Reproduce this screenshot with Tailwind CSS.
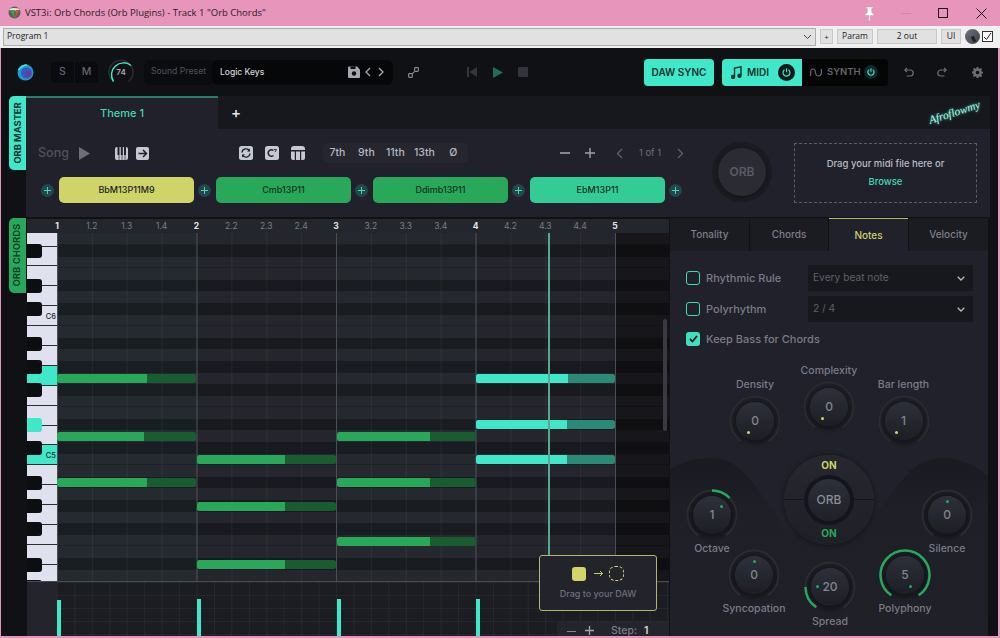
<!DOCTYPE html>
<html>
<head>
<meta charset="utf-8">
<script src="https://cdn.jsdelivr.net/npm/@tailwindcss/browser@4"></script>
</head>
<body class="m-0 overflow-hidden bg-[#e795ba]">
<div class="w-[1000px] h-[638px] flex flex-col overflow-hidden font-['Inter',sans-serif]">

  <!-- window title -->
  <div class="h-[26px] flex-none flex items-center bg-[#e795ba] text-[#2b1c28] font-['Open_Sans',sans-serif]">
    <svg class="ml-[8px] w-[13px] h-[14px]" viewBox="0 0 13 14"><circle cx="6.5" cy="6.5" r="6" fill="#5b5f64"/><path d="M1 3 Q6 1 12 3 Q10 5 8 5 Q6 4 4 5 Q2 5 1 3Z" fill="#e8e4d8"/><path d="M2 4 Q5 9 6.5 13 Q5 5 8 4Z" fill="#3fa34d"/><path d="M11 4 Q9 9 6.5 13 Q8 7 8 4Z" fill="#d9562c"/></svg>
    <span class="ml-[4px] text-[9.500px] whitespace-nowrap">VST3i: Orb Chords (Orb Plugins) - Track 1 "Orb Chords"</span>
    <svg class="ml-auto w-[13px] h-[15px]" viewBox="0 0 13 15" fill="#fff" stroke="#c9a3b5" stroke-width=".6"><path d="M3 1h7v1.5h-1.3v4l2.3 2v1H2v-1l2.3-2v-4H3Z"/><path d="M6.5 9.500v5" stroke="#fff" stroke-width="1.200"/></svg>
    <div class="ml-[25px] w-[10px] h-[1px] bg-[#cf8aa8]"></div>
    <div class="ml-[27px] w-[10px] h-[10px] border border-[#1d1218]"></div>
    <svg class="ml-[28px] mr-[13px] w-[11px] h-[11px]" viewBox="0 0 11 11" stroke="#1d1218" stroke-width="1"><path d="M.5 .5l10 10M10.500 .5l-10 10"/></svg>
  </div>

  <!-- host toolbar -->
  <div class="h-[22px] flex-none flex items-center pb-[2px] bg-[#f0f0f0] border-t border-[#fbf3f7] text-[#222] font-['Open_Sans',sans-serif]">
    <div class="ml-[3px] w-[813px] h-[18px] bg-[#e1e1e1] border border-[#adadad] flex items-center pl-[3px] pr-[3px]">
      <span class="text-[8.500px]">Program 1</span>
      <svg class="ml-auto w-[9px] h-[6px]" viewBox="0 0 9 6" fill="none" stroke="#444" stroke-width="1"><path d="M1 1l3.500 3.500L8 1"/></svg>
    </div>
    <div class="ml-[4px] w-[13px] h-[15px] bg-[#e1e1e1] border border-[#c8c8c8] flex items-center justify-center text-[8px]">+</div>
    <div class="ml-[4px] w-[36px] h-[15px] bg-[#e1e1e1] border border-[#c8c8c8] flex items-center justify-center text-[8.500px]">Param</div>
    <div class="ml-[4px] w-[60px] h-[15px] bg-[#e1e1e1] border border-[#c8c8c8] flex items-center justify-center text-[8.500px]">2 out</div>
    <div class="ml-[4px] w-[20px] h-[15px] bg-[#e1e1e1] border border-[#c8c8c8] flex items-center justify-center text-[8.500px]">UI</div>
    <div class="ml-[4px] w-[15px] h-[15px] rounded-full bg-gradient-to-br from-[#6f7680] to-[#3c4047] relative"><div class="absolute left-[7px] top-[7px] w-[3px] h-[6px] bg-[#1c2024] -rotate-[25deg]"></div></div>
    <div class="ml-[2px] w-[11px] h-[11px] bg-white border border-[#333] flex items-center justify-center">
      <svg class="w-[9px] h-[9px]" viewBox="0 0 9 9" fill="none" stroke="#222" stroke-width="1"><path d="M1 5l2.500 2.500L8 1"/></svg>
    </div>
  </div>

  <!-- plugin -->
  <div class="flex-1 min-h-0 ml-[1px] mr-[2px] mb-[2px] flex flex-col bg-[#0f1114] text-[#8a8c96]">

    <!-- top bar -->
    <div class="h-[48px] flex-none flex items-center">
      <svg class="ml-[16px] w-[17px] h-[17px]" viewBox="0 0 17 17"><circle cx="8.500" cy="8.500" r="8" fill="#18a0c8"/><circle cx="9.500" cy="9" r="5.500" fill="#3c56c8"/><circle cx="11" cy="10" r="3" fill="#6a3aa8"/><path d="M1.500 6Q5 1 10 1" stroke="#43e8d0" stroke-width="1.500" fill="none"/></svg>
      <div class="ml-[17px] w-[47px] h-[21px] rounded-[4px] bg-[#0a0b0e] flex text-[10.500px] font-medium text-[#62646c]">
        <div class="w-[24px] flex items-center justify-center border-r border-[#15161a]">S</div>
        <div class="flex-1 flex items-center justify-center">M</div>
      </div>
      <div class="ml-[10px] w-[26px] h-[26px] relative flex items-center justify-center text-[8px] font-semibold text-[#a8aab2]">
        <svg class="absolute inset-0 w-[26px] h-[26px]" viewBox="0 0 26 26" fill="none" stroke-width="1.500"><path d="M5.500 22.500A12 12 0 1 1 20.500 22.500" stroke="#2b2d30"/><path d="M5.500 22.500A12 12 0 0 1 23 6.500" stroke="#3fe8c8"/></svg>
        74
      </div>
      <div class="ml-[10px] h-[25px] w-[68px] bg-[#0b0c0f] rounded-l-[6px] flex items-center pl-[7px] text-[8.700px] text-[#50525b] whitespace-nowrap">Sound Preset</div>
      <div class="h-[25px] w-[181px] bg-[#060709] rounded-[6px] flex items-center pl-[8px] text-[8.500px] font-medium text-[#d4d5da]">
        Logic Keys
        <svg class="ml-auto w-[12px] h-[12px]" viewBox="0 0 12 12"><path d="M0 1.500Q0 .5 1 .5H9L12 3.500V11Q12 12 11 12H1Q0 12 0 11Z" fill="#a6a8b0"/><rect x="2.500" y=".5" width="5" height="2.500" fill="#0c0d10"/><circle cx="6" cy="7.500" r="2.200" fill="#0c0d10"/></svg>
        <svg class="ml-[5px] w-[6px] h-[10px]" viewBox="0 0 6 10" fill="none" stroke="#a6a8b0" stroke-width="1.300"><path d="M5 1L1 5l4 4"/></svg>
        <svg class="ml-[7px] mr-[9px] w-[6px] h-[10px]" viewBox="0 0 6 10" fill="none" stroke="#a6a8b0" stroke-width="1.300"><path d="M1 1l4 4-4 4"/></svg>
      </div>
      <svg class="ml-[15px] w-[11px] h-[11px]" viewBox="0 0 11 11" fill="none" stroke="#8a8c94" stroke-width="1.100"><rect x=".6" y="6.600" width="3.800" height="3.800" rx=".8"/><rect x="6.600" y=".6" width="3.800" height="3.800" rx=".8"/><path d="M4.400 6.600L6.600 4.400"/></svg>
      <svg class="ml-[48px] w-[10px] h-[10px]" viewBox="0 0 10 10" fill="#33353c"><rect width="2" height="10"/><path d="M10 0v10L2.500 5Z"/></svg>
      <svg class="ml-[16px] w-[10px] h-[11px]" viewBox="0 0 10 11" fill="#1f6e58"><path d="M0 0l10 5.500L0 11Z"/></svg>
      <div class="ml-[15px] w-[10px] h-[10px] rounded-[1px] bg-[#33353c]"></div>
      <div class="ml-[116px] w-[70px] h-[27px] rounded-[4px] bg-[#3fe8c8] flex items-center justify-center text-[10px] font-semibold text-[#16332f] whitespace-nowrap">DAW SYNC</div>
      <div class="ml-[8px] h-[27px] w-[80px] rounded-l-[4px] bg-[#3fe8c8] flex items-center text-[10px] font-semibold text-[#16332f]">
        <svg class="ml-[9px] w-[11px] h-[13px]" viewBox="0 0 11 13" fill="none" stroke="#16332f" stroke-width="1.400"><path d="M3.500 11V2L10 .8v8.500"/><circle cx="2" cy="11" r="1.500" fill="#16332f"/><circle cx="8.500" cy="9.800" r="1.500" fill="#16332f"/></svg>
        <span class="ml-[5px]">MIDI</span>
        <div class="ml-auto mr-[7px] w-[17px] h-[17px] rounded-full bg-[#10181a] flex items-center justify-center">
          <svg class="w-[9px] h-[9px]" viewBox="0 0 9 9" fill="none" stroke="#3fe8c8" stroke-width="1.200"><path d="M2.500 1.800a3.500 3.500 0 1 0 4 0M4.500 .3v4"/></svg>
        </div>
      </div>
      <div class="h-[27px] w-[86px] rounded-r-[4px] bg-[#050506] flex items-center text-[9.500px] font-semibold text-[#63656c]">
        <svg class="ml-[8px] w-[12px] h-[9px]" viewBox="0 0 12 9" fill="none" stroke="#63656c" stroke-width="1.200"><path d="M.6 8V4Q.8 1 3 1T5.500 4.500 8.500 8 11.400 5V1"/></svg>
        <span class="ml-[5px]">SYNTH</span>
        <div class="ml-auto mr-[10px] w-[14px] h-[14px] rounded-full bg-[#10282a] flex items-center justify-center">
          <svg class="w-[8px] h-[8px]" viewBox="0 0 9 9" fill="none" stroke="#3fe8c8" stroke-width="1.300"><path d="M2.500 1.800a3.500 3.500 0 1 0 4 0M4.500 .3v4"/></svg>
        </div>
      </div>
      <svg class="ml-[16px] w-[10px] h-[10px]" viewBox="0 0 10 10" fill="none" stroke="#6e7078" stroke-width="1.200"><path d="M3 .8L.8 3 3 5.200M1 3h5.200a3 3 0 0 1 0 6H2.500"/></svg>
      <svg class="ml-[23px] w-[10px] h-[10px]" viewBox="0 0 10 10" fill="none" stroke="#6e7078" stroke-width="1.200"><path d="M7 .8L9.200 3 7 5.200M9 3H3.800a3 3 0 0 0 0 6H7.500"/></svg>
      <svg class="ml-[25px] w-[11px] h-[11px]" viewBox="0 0 24 24" fill="#6a6c74"><path d="M10 0h4l.6 3.200 2 .8L19.300 2.200l2.800 2.800-1.800 2.700.8 2 3.200.6v4l-3.200.6-.8 2 1.800 2.700-2.800 2.800-2.700-1.800-2 .8L14 24h-4l-.6-3.200-2-.8-2.700 1.800-2.800-2.800 1.800-2.700-.8-2L0 14v-4l3.200-.6.8-2L2.200 4.700 5 1.900l2.700 1.800 2-.8ZM12 8a4 4 0 1 0 0 8 4 4 0 0 0 0-8Z"/></svg>
    </div>

    <!-- body -->
    <div class="flex-1 min-h-0 flex">
      <!-- side tabs -->
      <div class="w-[25px] flex-none flex flex-col items-end">
        <div class="w-[17px] h-[74px] rounded-l-[5px] bg-[#3fe8c8] flex items-center justify-center">
          <span class="-rotate-90 whitespace-nowrap text-[9.300px] font-bold text-[#123430]">ORB MASTER</span>
        </div>
        <div class="mt-[48px] w-[17px] h-[75px] rounded-l-[5px] bg-[#27a85c] flex items-center justify-center">
          <span class="-rotate-90 whitespace-nowrap text-[9.500px] font-semibold text-[#0f3a20]">ORB CHORDS</span>
        </div>
      </div>

      <!-- main column -->
      <div class="flex-1 min-w-0 flex flex-col pr-[8px]">
        <!-- tab row -->
        <div class="h-[33px] flex-none flex bg-[#17181e] relative">
          <div class="w-[192px] bg-[#20212a] border-t-2 border-[#2a7d6a] flex items-center justify-center text-[11px] font-medium text-[#3fd8b0]">Theme 1</div>
          <div class="ml-[13px] self-center text-[15px] leading-none font-medium text-[#e8e8ea]">+</div>
          <div class="absolute left-[902px] top-[11px] -rotate-[18deg] font-['Liberation_Serif',serif] italic text-[11.500px] leading-none text-[#b8f5e6] [text-shadow:0_0_3px_#2fd8b0]">Afroflowmy</div>
        </div>

        <!-- header panel -->
        <div class="h-[88px] flex-none bg-[#20212a] flex flex-col relative">
          <div class="h-[48px] flex-none flex items-center pb-[1px] pt-[1px]">
            <span class="ml-[12px] text-[12.500px] font-medium text-[#50525b]">Song</span>
            <svg class="ml-[10px] w-[11px] h-[13px]" viewBox="0 0 11 13" fill="#6c6e77"><path d="M0 0l11 6.500L0 13Z"/></svg>
            <svg class="ml-[25px] w-[13px] h-[13px]" viewBox="0 0 13 13"><rect width="13" height="13" rx="2" fill="#c6c8d2"/><rect x="2.500" width="2" height="8" fill="#20212a"/><rect x="5.800" width="2" height="8" fill="#20212a"/><rect x="9" width="2" height="8" fill="#20212a"/><path d="M4 8v5M7 8v5M10 8v5" stroke="#20212a" stroke-width=".7"/></svg>
            <svg class="ml-[8px] w-[13px] h-[13px]" viewBox="0 0 13 13"><rect width="13" height="13" rx="2" fill="#c6c8d2"/><path d="M2.500 6.500h7.500M7 3l3.500 3.500L7 10" stroke="#20212a" stroke-width="1.500" fill="none"/></svg>
            <svg class="ml-[90px] w-[14px] h-[14px]" viewBox="0 0 14 14"><rect width="14" height="14" rx="2.500" fill="#c6c8d2"/><path d="M3 6.500A4 4 0 0 1 10.500 5M11 7.500A4 4 0 0 1 3.500 9" stroke="#20212a" stroke-width="1.300" fill="none"/><path d="M11 2.500V5.500H8M3 11.500V8.500H6" fill="#20212a"/></svg>
            <svg class="ml-[12px] w-[14px] h-[14px]" viewBox="0 0 14 14"><rect width="14" height="14" rx="2.500" fill="#c6c8d2"/><path d="M8.500 4.500A3.200 3.200 0 1 0 8.500 9.500" stroke="#20212a" stroke-width="1.400" fill="none"/><path d="M9 3.500h2.500L10 6" stroke="#20212a" stroke-width=".9" fill="none"/></svg>
            <svg class="ml-[12px] w-[14px] h-[14px]" viewBox="0 0 14 14"><path d="M0 3Q0 0 3 0H11Q14 0 14 3V4H0Z" fill="#c6c8d2"/><path d="M0 5.500H3.800V14H2Q0 14 0 12ZM5 5.500H9V14H5ZM10.200 5.500H14V12Q14 14 12 14H10.200Z" fill="#c6c8d2"/></svg>
            <div class="ml-[18px] w-[145px] h-[20px] rounded-[5px] bg-[#25262e] flex items-center text-[10.500px] font-medium text-[#b5b7c0]">
              <span class="w-[29px] text-center">7th</span><span class="w-[29px] text-center">9th</span><span class="w-[29px] text-center">11th</span><span class="w-[29px] text-center">13th</span><span class="w-[29px] text-center">Ø</span>
            </div>
            <span class="ml-[92px] w-[10px] h-[1.500px] bg-[#85878f]"></span>
            <svg class="ml-[15px] w-[10px] h-[10px]" viewBox="0 0 10 10" stroke="#a0a2aa" stroke-width="1.400"><path d="M0 5h10M5 0v10"/></svg>
            <svg class="ml-[21px] w-[7px] h-[11px]" viewBox="0 0 7 11" fill="none" stroke="#5f6169" stroke-width="1.300"><path d="M6 1L1.500 5.500 6 10"/></svg>
            <span class="ml-[16px] w-[24px] text-[9.500px] whitespace-nowrap text-[#6d6f78]">1 of 1</span>
            <svg class="ml-[14px] w-[7px] h-[11px]" viewBox="0 0 7 11" fill="none" stroke="#5f6169" stroke-width="1.300"><path d="M1 1l4.500 4.500L1 10"/></svg>
          </div>
          <div class="flex items-center gap-[4px] pl-[15px]">
            <span class="w-[13px] h-[13px] rounded-full bg-[#23474c] flex items-center justify-center"><svg class="w-[7px] h-[7px]" viewBox="0 0 7 7" stroke="#3fd8b8" stroke-width="1"><path d="M0 3.500h7M3.500 0v7"/></svg></span>
            <div class="ml-[1px] w-[135px] h-[26px] rounded-[5px] bg-[#cfd468] flex items-center justify-center text-[9px] font-medium text-[#1c1d22]">BbM13P11M9</div>
            <span class="w-[13px] h-[13px] rounded-full bg-[#23474c] flex items-center justify-center"><svg class="w-[7px] h-[7px]" viewBox="0 0 7 7" stroke="#3fd8b8" stroke-width="1"><path d="M0 3.500h7M3.500 0v7"/></svg></span>
            <div class="ml-[1px] w-[135px] h-[26px] rounded-[5px] bg-[#28a858] flex items-center justify-center text-[9px] font-medium text-[#12301f]">Cmb13P11</div>
            <span class="w-[13px] h-[13px] rounded-full bg-[#23474c] flex items-center justify-center"><svg class="w-[7px] h-[7px]" viewBox="0 0 7 7" stroke="#3fd8b8" stroke-width="1"><path d="M0 3.500h7M3.500 0v7"/></svg></span>
            <div class="ml-[1px] w-[135px] h-[26px] rounded-[5px] bg-[#28a858] flex items-center justify-center text-[9px] font-medium text-[#12301f]">Ddimb13P11</div>
            <span class="w-[13px] h-[13px] rounded-full bg-[#23474c] flex items-center justify-center"><svg class="w-[7px] h-[7px]" viewBox="0 0 7 7" stroke="#3fd8b8" stroke-width="1"><path d="M0 3.500h7M3.500 0v7"/></svg></span>
            <div class="ml-[1px] w-[135px] h-[26px] rounded-[5px] bg-[#33cc96] flex items-center justify-center text-[9px] font-medium text-[#12301f]">EbM13P11</div>
            <span class="w-[13px] h-[13px] rounded-full bg-[#23474c] flex items-center justify-center"><svg class="w-[7px] h-[7px]" viewBox="0 0 7 7" stroke="#3fd8b8" stroke-width="1"><path d="M0 3.500h7M3.500 0v7"/></svg></span>
          </div>
          <!-- ORB big + drop box -->
          <div class="absolute left-[686px] top-[13px] w-[60px] h-[60px] rounded-full bg-[#1a1b21] flex items-center justify-center">
            <div class="w-[48px] h-[48px] rounded-full bg-[#2a2b33] flex items-center justify-center text-[12px] font-semibold text-[#5a5c66] shadow-[0_1px_3px_#0006]">ORB</div>
          </div>
          <div class="absolute left-[768px] top-[14px] w-[183px] h-[60px] border border-dashed border-[#5a5c63] flex flex-col items-center pt-[13px]">
            <span class="text-[9.500px] font-medium leading-[14px] text-[#b9bbc3] whitespace-nowrap">Drag your midi file here or</span>
            <span class="mt-[4px] text-[9.500px] font-medium leading-[13px] text-[#3fd8b8]">Browse</span>
          </div>
        </div>

        <!-- workspace -->
        <div class="flex-1 min-h-0 flex pt-[2px]">
          <!-- piano roll -->
          <div class="w-[642px] flex-none ml-[1px] flex flex-col relative overflow-hidden">
            <div class="h-[14.400px] flex-none bg-[#24262d] flex items-center pl-[12.600px] text-[8.500px] leading-none text-[#7a7c85]">
              <span class="w-[34.875px] flex-none text-center font-bold text-[#e4e5ea]">1</span><span class="w-[34.875px] flex-none text-center">1.2</span><span class="w-[34.875px] flex-none text-center">1.3</span><span class="w-[34.875px] flex-none text-center">1.4</span>
              <span class="w-[34.875px] flex-none text-center font-bold text-[#e4e5ea]">2</span><span class="w-[34.875px] flex-none text-center">2.2</span><span class="w-[34.875px] flex-none text-center">2.3</span><span class="w-[34.875px] flex-none text-center">2.4</span>
              <span class="w-[34.875px] flex-none text-center font-bold text-[#e4e5ea]">3</span><span class="w-[34.875px] flex-none text-center">3.2</span><span class="w-[34.875px] flex-none text-center">3.3</span><span class="w-[34.875px] flex-none text-center">3.4</span>
              <span class="w-[34.875px] flex-none text-center font-bold text-[#e4e5ea]">4</span><span class="w-[34.875px] flex-none text-center">4.2</span><span class="w-[34.875px] flex-none text-center">4.3</span><span class="w-[34.875px] flex-none text-center">4.4</span>
              <span class="w-[34.875px] flex-none text-center font-bold text-[#e4e5ea]">5</span>
            </div>

            <div class="h-[348px] flex-none flex">
              <!-- keyboard -->
              <div class="w-[30px] flex-none relative overflow-hidden flex flex-col bg-[#dfe1ee] text-[7.500px] font-medium text-[#23252b]">
                <div class="h-[13.200px] flex-none border-b border-[#2a2d33]"></div>
                <div class="h-[19.900px] flex-none border-b border-[#2a2d33]"></div>
                <div class="h-[19.900px] flex-none border-b border-[#2a2d33]"></div>
                <div class="h-[19.900px] flex-none border-b border-[#2a2d33]"></div>
                <div class="h-[19.900px] flex-none border-b border-[#2a2d33] flex items-end justify-end pr-[1px] pb-[5px] leading-none">C6</div>
                <div class="h-[19.900px] flex-none border-b border-[#2a2d33]"></div>
                <div class="h-[19.900px] flex-none border-b border-[#2a2d33]"></div>
                <div class="h-[19.900px] flex-none border-b border-[#2a2d33] bg-[#3fe8c8]"></div>
                <div class="h-[19.900px] flex-none border-b border-[#2a2d33]"></div>
                <div class="h-[19.900px] flex-none border-b border-[#2a2d33]"></div>
                <div class="h-[19.900px] flex-none border-b border-[#2a2d33]"></div>
                <div class="h-[19.900px] flex-none border-b border-[#2a2d33] bg-[#3fe8c8] flex items-end justify-end pr-[1px] pb-[5px] leading-none">C5</div>
                <div class="h-[19.900px] flex-none border-b border-[#2a2d33]"></div>
                <div class="h-[19.900px] flex-none border-b border-[#2a2d33]"></div>
                <div class="h-[19.900px] flex-none border-b border-[#2a2d33]"></div>
                <div class="h-[19.900px] flex-none border-b border-[#2a2d33]"></div>
                <div class="h-[19.900px] flex-none border-b border-[#2a2d33]"></div>
                <div class="h-[19.900px] flex-none"></div>
                <div class="absolute left-0 top-[10.500px] w-[15px] h-[14px] rounded-r-[3px] bg-[#0d0e11]"></div>
                <div class="absolute left-0 top-[45.500px] w-[15px] h-[14px] rounded-r-[3px] bg-[#0d0e11]"></div>
                <div class="absolute left-0 top-[68.500px] w-[15px] h-[14px] rounded-r-[3px] bg-[#0d0e11]"></div>
                <div class="absolute left-0 top-[103.500px] w-[15px] h-[14px] rounded-r-[3px] bg-[#0d0e11]"></div>
                <div class="absolute left-0 top-[127px] w-[15px] h-[14px] rounded-r-[3px] bg-[#0d0e11]"></div>
                <div class="absolute left-0 top-[150px] w-[15px] h-[14px] rounded-r-[3px] bg-[#0d0e11]"></div>
                <div class="absolute left-0 top-[185px] w-[15px] h-[14px] rounded-r-[3px] bg-[#3fe8c8]"></div>
                <div class="absolute left-0 top-[208px] w-[15px] h-[14px] rounded-r-[3px] bg-[#0d0e11]"></div>
                <div class="absolute left-0 top-[243px] w-[15px] h-[14px] rounded-r-[3px] bg-[#0d0e11]"></div>
                <div class="absolute left-0 top-[266px] w-[15px] h-[14px] rounded-r-[3px] bg-[#0d0e11]"></div>
                <div class="absolute left-0 top-[289px] w-[15px] h-[14px] rounded-r-[3px] bg-[#0d0e11]"></div>
                <div class="absolute left-0 top-[325px] w-[15px] h-[14px] rounded-r-[3px] bg-[#0d0e11]"></div>
                <div class="absolute left-0 top-[347px] w-[15px] h-[14px] rounded-r-[3px] bg-[#0d0e11]"></div>
              </div>

              <!-- grid -->
              <div class="flex-1 relative overflow-hidden flex flex-col">
                <div class="h-[11.600px] flex-none bg-[#25262d] border-b border-black/20"></div>
                <div class="h-[11.600px] flex-none bg-[#191a1f]"></div>
                <div class="h-[11.600px] flex-none bg-[#25262d] border-b border-black/20"></div>
                <div class="h-[11.600px] flex-none bg-[#25262d]"></div>
                <div class="h-[11.600px] flex-none bg-[#191a1f]"></div>
                <div class="h-[11.600px] flex-none bg-[#25262d]"></div>
                <div class="h-[11.600px] flex-none bg-[#191a1f]"></div>
                <div class="h-[11.600px] flex-none bg-[#25262d] border-b border-black/20"></div>
                <div class="h-[11.600px] flex-none bg-[#25262d]"></div>
                <div class="h-[11.600px] flex-none bg-[#191a1f]"></div>
                <div class="h-[11.600px] flex-none bg-[#25262d]"></div>
                <div class="h-[11.600px] flex-none bg-[#191a1f]"></div>
                <div class="h-[11.600px] flex-none bg-[#25262d]"></div>
                <div class="h-[11.600px] flex-none bg-[#191a1f]"></div>
                <div class="h-[11.600px] flex-none bg-[#25262d] border-b border-black/20"></div>
                <div class="h-[11.600px] flex-none bg-[#25262d]"></div>
                <div class="h-[11.600px] flex-none bg-[#191a1f]"></div>
                <div class="h-[11.600px] flex-none bg-[#25262d]"></div>
                <div class="h-[11.600px] flex-none bg-[#191a1f]"></div>
                <div class="h-[11.600px] flex-none bg-[#25262d] border-b border-black/20"></div>
                <div class="h-[11.600px] flex-none bg-[#25262d]"></div>
                <div class="h-[11.600px] flex-none bg-[#191a1f]"></div>
                <div class="h-[11.600px] flex-none bg-[#25262d]"></div>
                <div class="h-[11.600px] flex-none bg-[#191a1f]"></div>
                <div class="h-[11.600px] flex-none bg-[#25262d]"></div>
                <div class="h-[11.600px] flex-none bg-[#191a1f]"></div>
                <div class="h-[11.600px] flex-none bg-[#25262d] border-b border-black/20"></div>
                <div class="h-[11.600px] flex-none bg-[#25262d]"></div>
                <div class="h-[11.600px] flex-none bg-[#191a1f]"></div>
                <div class="h-[11.600px] flex-none bg-[#25262d]"></div>

                <!-- region tints -->
                <div class="absolute left-0 top-0 bottom-0 w-[139.500px] bg-[#3fe8c8]/[0.025]"></div>
                <div class="absolute left-[279px] top-0 bottom-0 w-[139.500px] bg-[#3fe8c8]/[0.015]"></div>
                <div class="absolute left-[558px] top-0 bottom-0 right-0 bg-black/40"></div>
                <!-- beat and bar lines -->
                <div class="absolute left-0 top-0 bottom-0 w-[558px] bg-[linear-gradient(90deg,#ffffff0c_1px,transparent_1px)] bg-[size:34.875px_100%]"></div>
                <div class="absolute left-0 top-0 bottom-0 w-[559px] bg-[linear-gradient(90deg,#4c4e54_1px,transparent_1px)] bg-[size:139.500px_100%]"></div>

                <!-- notes: bar 1 -->
                <div class="absolute left-[0px] top-[140.500px] w-[139px] h-[9px] rounded-[2.500px] overflow-hidden bg-[#1a5c31]"><div class="w-[90px] h-full bg-[#28a858]"></div></div>
                <div class="absolute left-[0px] top-[198.500px] w-[139px] h-[9px] rounded-[2.500px] overflow-hidden bg-[#1a5c31]"><div class="w-[87px] h-full bg-[#28a858]"></div></div>
                <div class="absolute left-[0px] top-[245px] w-[139px] h-[9px] rounded-[2.500px] overflow-hidden bg-[#1a5c31]"><div class="w-[90px] h-full bg-[#28a858]"></div></div>
                <!-- bar 2 -->
                <div class="absolute left-[140px] top-[221.500px] w-[139px] h-[9px] rounded-[2.500px] overflow-hidden bg-[#1a5c31]"><div class="w-[88px] h-full bg-[#28a858]"></div></div>
                <div class="absolute left-[140px] top-[268.500px] w-[139px] h-[9px] rounded-[2.500px] overflow-hidden bg-[#1a5c31]"><div class="w-[88px] h-full bg-[#28a858]"></div></div>
                <div class="absolute left-[140px] top-[326.500px] w-[139px] h-[9px] rounded-[2.500px] overflow-hidden bg-[#1a5c31]"><div class="w-[88px] h-full bg-[#28a858]"></div></div>
                <!-- bar 3 -->
                <div class="absolute left-[279.500px] top-[198.500px] w-[139px] h-[9px] rounded-[2.500px] overflow-hidden bg-[#1a5c31]"><div class="w-[93px] h-full bg-[#28a858]"></div></div>
                <div class="absolute left-[279.500px] top-[245px] w-[139px] h-[9px] rounded-[2.500px] overflow-hidden bg-[#1a5c31]"><div class="w-[93px] h-full bg-[#28a858]"></div></div>
                <div class="absolute left-[279.500px] top-[303.500px] w-[139px] h-[9px] rounded-[2.500px] overflow-hidden bg-[#1a5c31]"><div class="w-[93px] h-full bg-[#28a858]"></div></div>
                <!-- bar 4 -->
                <div class="absolute left-[419px] top-[140.500px] w-[139px] h-[9px] rounded-[2.500px] overflow-hidden bg-[#2a8a75]"><div class="w-[92px] h-full bg-[#3fe8c8]"></div></div>
                <div class="absolute left-[419px] top-[187px] w-[139px] h-[9px] rounded-[2.500px] overflow-hidden bg-[#2a8a75]"><div class="w-[91px] h-full bg-[#3fe8c8]"></div></div>
                <div class="absolute left-[419px] top-[221.500px] w-[139px] h-[9px] rounded-[2.500px] overflow-hidden bg-[#2a8a75]"><div class="w-[91px] h-full bg-[#3fe8c8]"></div></div>
                <!-- playhead -->
                <div class="absolute left-[491px] top-0 bottom-0 w-[2px] bg-[#58a894]"></div>
                <!-- scrollbar -->
                <div class="absolute left-[606px] top-[86px] w-[4px] h-[112px] rounded-full bg-[#3a3b41]"></div>
              </div>
            </div>

            <!-- velocity lane -->
            <div class="flex-1 min-h-0 flex border-t border-[#4a4b52]">
              <div class="w-[30px] flex-none bg-[#24242c]"></div>
              <div class="flex-1 relative bg-[#1c1d23] bg-[linear-gradient(90deg,#ffffff0b_1px,transparent_1px),linear-gradient(180deg,#ffffff0b_1px,transparent_1px)] bg-[size:17.440px_100%,100%_13px]">
                <div class="absolute left-0 top-[18px] bottom-0 w-[4px] bg-[#3fe8c8]"></div>
                <div class="absolute left-[140px] top-[17px] bottom-0 w-[4px] bg-[#3fe8c8]"></div>
                <div class="absolute left-[279.500px] top-[17px] bottom-0 w-[4px] bg-[#3fe8c8]"></div>
                <div class="absolute left-[419px] top-[17px] bottom-0 w-[4px] bg-[#3fe8c8]"></div>
                <div class="absolute right-0 bottom-0 w-[112px] h-[14px] bg-[#24252c] flex items-end text-[10.500px] leading-none font-medium text-[#7b7d86]">
                  <span class="ml-[10px] mb-[4px] w-[9px] h-[1.500px] bg-[#85878f]"></span>
                  <svg class="ml-[9px] mb-[1px] w-[9px] h-[9px]" viewBox="0 0 9 9" stroke="#a0a2aa" stroke-width="1.300"><path d="M0 4.500h9M4.500 0v9"/></svg>
                  <span class="ml-[17px]">Step:</span><span class="ml-[7px] font-semibold text-[#d4d5da]">1</span>
                </div>
              </div>
            </div>

            <!-- drag hint -->
            <div class="absolute left-[512px] top-[336px] w-[118px] h-[56px] rounded-[3px] border border-[#b4b766] bg-[#22232b] flex flex-col items-center">
              <div class="mt-[10px] flex items-center">
                <div class="w-[14px] h-[14px] rounded-[3px] bg-[#d2d66a]"></div>
                <svg class="ml-[8px] w-[9px] h-[7px]" viewBox="0 0 9 7" fill="none" stroke="#c8cc68" stroke-width="1"><path d="M0 3.500h8.500M6 1l2.500 2.500L6 6"/></svg>
                <div class="ml-[6px] w-[15px] h-[15px] rounded-[6px] border-[1.500px] border-dashed border-[#d2d66a]"></div>
              </div>
              <span class="mt-[6px] text-[9px] font-medium text-[#6d6f7a] whitespace-nowrap">Drag to your DAW</span>
            </div>
          </div>

          <!-- right panel -->
          <div class="ml-[1px] -mt-[1px] w-[318px] flex-none flex flex-col">
            <div class="h-[33px] flex-none flex text-[10px] font-medium text-[#7c7e88]">
              <div class="w-[79px] bg-[#1b1c22] flex items-center justify-center">Tonality</div>
              <div class="ml-[1px] w-[78px] bg-[#1b1c22] flex items-center justify-center">Chords</div>
              <div class="ml-[1px] w-[79px] bg-[#20212a] border-t border-[#b8bb66] flex items-center justify-center text-[#cdd16a]">Notes</div>
              <div class="ml-[1px] w-[79px] bg-[#1b1c22] flex items-center justify-center">Velocity</div>
            </div>
            <div class="flex-1 min-h-0 bg-[#20212a] flex flex-col text-[#7a7c87]">
              <div class="mt-[14px] flex items-center pl-[16px]">
                <div class="w-[14px] h-[14px] rounded-[3px] border-[1.500px] border-[#3fd8b8]"></div>
                <span class="ml-[6px] w-[102px] text-[11px] font-medium">Rhythmic Rule</span>
                <div class="w-[165px] h-[26px] bg-[#17181e] flex items-center pl-[5px] pr-[8px] text-[10.200px] text-[#5e606b]">Every beat note
                  <svg class="ml-auto w-[8px] h-[5px]" viewBox="0 0 8 5" fill="none" stroke="#b5b7bd" stroke-width="1.300"><path d="M.7 .7L4 4 7.300 .7"/></svg>
                </div>
              </div>
              <div class="mt-[5px] flex items-center pl-[16px]">
                <div class="w-[14px] h-[14px] rounded-[3px] border-[1.500px] border-[#3fd8b8]"></div>
                <span class="ml-[6px] w-[102px] text-[11px] font-medium">Polyrhythm</span>
                <div class="w-[165px] h-[26px] bg-[#17181e] flex items-center pl-[5px] pr-[8px] text-[10.200px] text-[#5e606b]">2 / 4
                  <svg class="ml-auto w-[8px] h-[5px]" viewBox="0 0 8 5" fill="none" stroke="#b5b7bd" stroke-width="1.300"><path d="M.7 .7L4 4 7.300 .7"/></svg>
                </div>
              </div>
              <div class="mt-[9px] flex items-center pl-[16px]">
                <div class="w-[14px] h-[14px] rounded-[3px] bg-[#3fe0c0] flex items-center justify-center">
                  <svg class="w-[9px] h-[8px]" viewBox="0 0 9 8" fill="none" stroke="#14161a" stroke-width="1.800"><path d="M1 4l2.500 2.500L8 1"/></svg>
                </div>
                <span class="ml-[6px] text-[11px] font-medium whitespace-nowrap">Keep Bass for Chords</span>
              </div>

              <!-- upper knobs -->
              <div class="mt-[15px] ml-[48px] flex items-start text-[10.500px] font-medium">
                <div class="w-[74px] pt-[14px] flex flex-col items-center">
                  <span class="mt-[1px] h-[14px] leading-[14px]">Density</span>
                  <div class="mt-[3px] relative w-[52px] h-[52px] flex items-center justify-center">
                    <svg class="absolute inset-0" width="52" height="52" viewBox="0 0 52 52" fill="none" stroke-width="2"><path d="M12.300 46.300A24.500 24.500 0 1 1 39.700 46.300" stroke="#2a2b2e"/></svg>
                    <div class="w-[38px] h-[38px] rounded-full bg-gradient-to-b from-[#2e303a] to-[#1d1e25] shadow-[0_1px_4px_3px_#0005] flex items-center justify-center text-[12px] text-[#83858f]">0</div>
                    <div class="absolute left-[17.800px] top-[36.800px] w-[3px] h-[3px] rounded-full bg-[#d2d66a]"></div>
                  </div>
                </div>
                <div class="w-[74px] flex flex-col items-center">
                  <span class="mt-[1px] h-[14px] leading-[14px]">Complexity</span>
                  <div class="mt-[3px] relative w-[52px] h-[52px] flex items-center justify-center">
                    <svg class="absolute inset-0" width="52" height="52" viewBox="0 0 52 52" fill="none" stroke-width="2"><path d="M12.300 46.300A24.500 24.500 0 1 1 39.700 46.300" stroke="#2a2b2e"/></svg>
                    <div class="w-[38px] h-[38px] rounded-full bg-gradient-to-b from-[#2e303a] to-[#1d1e25] shadow-[0_1px_4px_3px_#0005] flex items-center justify-center text-[12px] text-[#83858f]">0</div>
                    <div class="absolute left-[17.800px] top-[36.800px] w-[3px] h-[3px] rounded-full bg-[#d2d66a]"></div>
                  </div>
                </div>
                <div class="w-[75px] pt-[14px] flex flex-col items-center">
                  <span class="mt-[1px] h-[14px] leading-[14px]">Bar length</span>
                  <div class="mt-[3px] relative w-[52px] h-[52px] flex items-center justify-center">
                    <svg class="absolute inset-0" width="52" height="52" viewBox="0 0 52 52" fill="none" stroke-width="2"><path d="M12.300 46.300A24.500 24.500 0 1 1 39.700 46.300" stroke="#2a2b2e"/></svg>
                    <div class="w-[38px] h-[38px] rounded-full bg-gradient-to-b from-[#2e303a] to-[#1d1e25] shadow-[0_1px_4px_3px_#0005] flex items-center justify-center text-[12px] text-[#83858f]">1</div>
                    <div class="absolute left-[17.800px] top-[36.800px] w-[3px] h-[3px] rounded-full bg-[#d2d66a]"></div>
                  </div>
                </div>
              </div>

              <!-- lower cluster: a free arrangement of dials -->
              <div class="flex-1 relative text-[10.500px] font-medium overflow-hidden">
                <svg class="absolute left-0 top-0" width="318" height="190" viewBox="0 0 318 190">
                  <defs>
                    <linearGradient id="hump" x1="0" y1="0" x2="0" y2="1"><stop offset="0" stop-color="#1a1b21"/><stop offset=".3" stop-color="#1e1f27"/><stop offset="1" stop-color="#1f2028"/></linearGradient>
                  </defs>
                  <path d="M0 22Q20 11 40 11C80 11 90 55 120 85L190 85C225 50 235 11 273 11Q295 11 318 28V190H0Z" fill="url(#hump)"/>
                </svg>

                <!-- centre ORB -->
                <div class="absolute left-[114px] top-[8px] w-[90px] h-[90px] rounded-full bg-gradient-to-b from-[#26272f] to-[#1f2027] shadow-[0_0_5px_#0007] flex items-center justify-center">
                  <div class="absolute left-0 top-[44px] w-[90px] h-[1.500px] bg-[#14151a]"></div>
                  <span class="absolute top-[3px] text-[10px] font-bold text-[#cdd16a]">ON</span>
                  <span class="absolute bottom-[4px] text-[10px] font-bold text-[#27a85c]">ON</span>
                  <div class="relative w-[50px] h-[50px] rounded-full bg-[#14151a] flex items-center justify-center">
                    <div class="w-[42px] h-[42px] rounded-full bg-gradient-to-b from-[#2e303a] to-[#1f2027] flex items-center justify-center text-[12px] font-medium text-[#8a8c96]">ORB</div>
                  </div>
                </div>

                <!-- Octave -->
                <div class="absolute left-[-3px] top-[42px] w-[90px] flex flex-col items-center">
                  <div class="relative w-[52px] h-[52px] flex items-center justify-center">
                    <svg class="absolute inset-0" width="52" height="52" viewBox="0 0 52 52" fill="none" stroke-width="2"><path d="M12.300 46.300A24.500 24.500 0 1 1 39.700 46.300" stroke="#2a2c30"/><path d="M26 1.500A24.500 24.500 0 0 1 43.600 9" stroke="#27a85c" stroke-width="2.500"/></svg>
                    <div class="w-[38px] h-[38px] rounded-full bg-gradient-to-b from-[#2e303a] to-[#1d1e25] shadow-[0_1px_4px_3px_#0005] flex items-center justify-center text-[12px] text-[#83858f]">1</div>
                    <div class="absolute left-[34px] top-[16px] w-[3px] h-[3px] rounded-full bg-[#27a85c]"></div>
                  </div>
                  <span class="mt-[1px] h-[14px] leading-[14px]">Octave</span>
                </div>
                <!-- Silence -->
                <div class="absolute left-[232px] top-[42px] w-[90px] flex flex-col items-center">
                  <div class="relative w-[52px] h-[52px] flex items-center justify-center">
                    <svg class="absolute inset-0" width="52" height="52" viewBox="0 0 52 52" fill="none" stroke-width="2"><path d="M12.300 46.300A24.500 24.500 0 1 1 39.700 46.300" stroke="#2a2c30"/></svg>
                    <div class="w-[38px] h-[38px] rounded-full bg-gradient-to-b from-[#2e303a] to-[#1d1e25] shadow-[0_1px_4px_3px_#0005] flex items-center justify-center text-[12px] text-[#83858f]">0</div>
                    <div class="absolute left-[24.500px] top-[11.500px] w-[3px] h-[3px] rounded-full bg-[#27a85c]"></div>
                  </div>
                  <span class="mt-[1px] h-[14px] leading-[14px]">Silence</span>
                </div>
                <!-- Syncopation -->
                <div class="absolute left-[39px] top-[102px] w-[90px] flex flex-col items-center">
                  <div class="relative w-[52px] h-[52px] flex items-center justify-center">
                    <svg class="absolute inset-0" width="52" height="52" viewBox="0 0 52 52" fill="none" stroke-width="2"><path d="M12.300 46.300A24.500 24.500 0 1 1 39.700 46.300" stroke="#2a2c30"/></svg>
                    <div class="w-[38px] h-[38px] rounded-full bg-gradient-to-b from-[#2e303a] to-[#1d1e25] shadow-[0_1px_4px_3px_#0005] flex items-center justify-center text-[12px] text-[#83858f]">0</div>
                    <div class="absolute left-[24.500px] top-[11.500px] w-[3px] h-[3px] rounded-full bg-[#27a85c]"></div>
                  </div>
                  <span class="mt-[1px] h-[14px] leading-[14px]">Syncopation</span>
                </div>
                <!-- Spread -->
                <div class="absolute left-[115px] top-[114px] w-[90px] flex flex-col items-center">
                  <div class="relative w-[52px] h-[52px] flex items-center justify-center">
                    <svg class="absolute inset-0" width="52" height="52" viewBox="0 0 52 52" fill="none" stroke-width="2"><path d="M12.300 46.300A24.500 24.500 0 1 1 39.700 46.300" stroke="#2a2c30"/><path d="M12.300 46.300A24.500 24.500 0 0 1 1.500 26" stroke="#27a85c" stroke-width="2.500"/></svg>
                    <div class="w-[38px] h-[38px] rounded-full bg-gradient-to-b from-[#2e303a] to-[#1d1e25] shadow-[0_1px_4px_3px_#0005] flex items-center justify-center text-[12px] text-[#83858f]">20</div>
                    <div class="absolute left-[11.500px] top-[24.500px] w-[3px] h-[3px] rounded-full bg-[#27a85c]"></div>
                  </div>
                  <span class="mt-[2px] h-[14px] leading-[14px]">Spread</span>
                </div>
                <!-- Polyphony -->
                <div class="absolute left-[190px] top-[102px] w-[90px] flex flex-col items-center">
                  <div class="relative w-[52px] h-[52px] flex items-center justify-center">
                    <svg class="absolute inset-0" width="52" height="52" viewBox="0 0 52 52" fill="none" stroke-width="2.500"><path d="M12.300 46.300A24.500 24.500 0 1 1 39.700 46.300" stroke="#27a85c"/></svg>
                    <div class="w-[38px] h-[38px] rounded-full bg-gradient-to-b from-[#2e303a] to-[#1d1e25] shadow-[0_1px_4px_3px_#0005] flex items-center justify-center text-[12px] text-[#83858f]">5</div>
                    <div class="absolute left-[29.500px] top-[36.500px] w-[3px] h-[3px] rounded-full bg-[#27a85c]"></div>
                  </div>
                  <span class="mt-[1px] h-[14px] leading-[14px]">Polyphony</span>
                </div>
              </div>
            </div>
          </div>
        </div>
      </div>
    </div>
  </div>
</div>
</body>
</html>
